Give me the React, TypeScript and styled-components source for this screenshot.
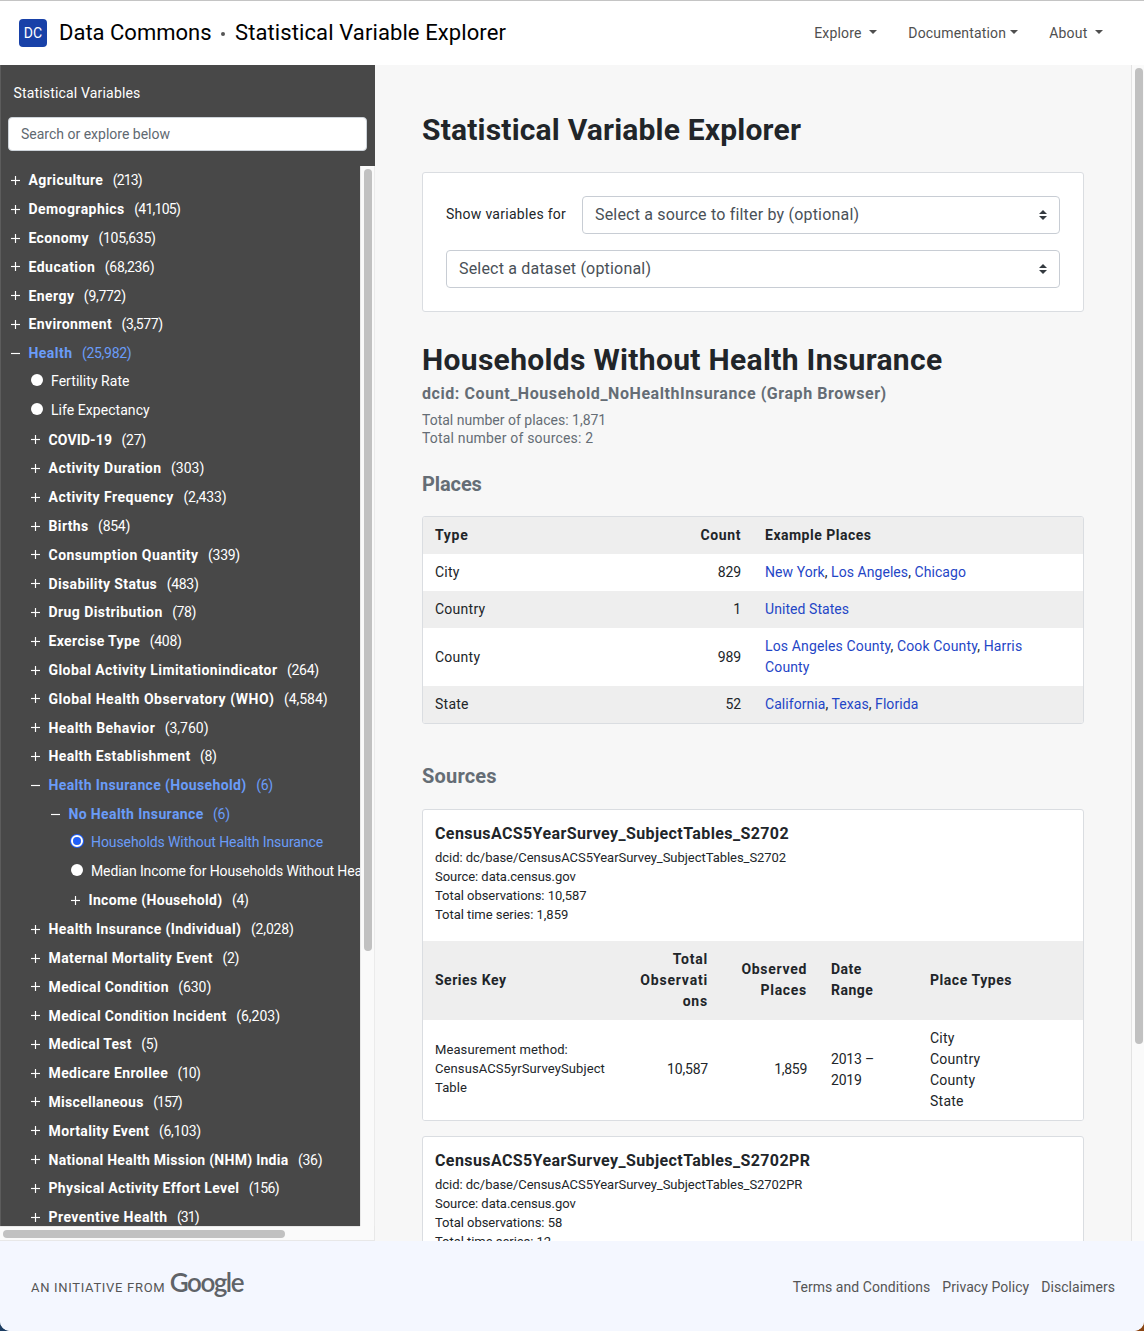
import React from 'react';
import styled, { createGlobalStyle, css } from 'styled-components';

const GlobalStyle = createGlobalStyle`
  *, *::before, *::after { box-sizing: border-box; }
  body {
    margin: 0;
    background: linear-gradient(90deg, #1c3d63 50%, #8a4513 50%);
    font-family: Roboto, "Liberation Sans", sans-serif;
    font-size: 14px;
    line-height: 21px;
    color: #212529;
  }
`;

const Page = styled.div`
  width: 1144px;
  height: 1331px;
  display: flex;
  flex-direction: column;
  overflow: hidden;
  background: #fff;
  border-radius: 0 0 10px 10px;
`;

/* ---------- header ---------- */

const Header = styled.header`
  height: 65px;
  flex: none;
  display: flex;
  align-items: center;
  padding: 0 41px 0 19px;
  border-top: 1px solid #c4c4c4;
`;

const Badge = styled.div`
  width: 28px;
  height: 28px;
  border-radius: 4px;
  background: #1841a8;
  color: #fff;
  font-size: 14px;
  line-height: 29px;
  text-align: center;
  letter-spacing: 0.2px;
`;

const Brand = styled.div<{ $spacing: number }>`
  font-size: 22px;
  line-height: 30px;
  color: #000;
  letter-spacing: ${(p) => p.$spacing}px;
  white-space: nowrap;
`;

const BrandGroup = styled.div`
  display: flex;
  align-items: center;
  margin-left: 12px;
  padding-bottom: 1px;
`;

const Dot = styled.span`
  width: 4px;
  height: 4px;
  margin: 3px 10px 0 9.5px;
  border-radius: 50%;
  background: #555;
`;

const Nav = styled.nav`
  margin-left: auto;
  display: flex;
  gap: 31.2px;
`;

const NavItem = styled.a<{ $gap: number }>`
  display: flex;
  align-items: center;
  gap: ${(p) => p.$gap}px;
  color: #4f4f4f;
  letter-spacing: 0.17px;

  &::after {
    content: '';
    margin-bottom: 3px;
    border: 4px solid transparent;
    border-top-color: #4f4f4f;
    border-bottom: 0;
  }
`;

/* ---------- body ---------- */

const Body = styled.div`
  height: 1176px;
  flex: none;
  display: flex;
  background: #f7f7f7;
`;

const Sidebar = styled.aside`
  width: 375px;
  flex: none;
  display: flex;
  flex-direction: column;
  background: #484848;
  color: #fff;
`;

const SidebarTop = styled.div`
  height: 101px;
  flex: none;
  padding: 18px 8px 0;
  border-left: 1px solid #5c5c5c;
`;

const SidebarTitle = styled.div`
  padding-left: 4.5px;
  letter-spacing: 0.17px;
`;

const Search = styled.input`
  display: block;
  width: 359px;
  height: 34px;
  margin: 13px 0 0 -1px;
  padding: 0 12px;
  border: 1px solid #ced4da;
  border-radius: 4px;
  background: #fff;
  font: 14px Roboto, "Liberation Sans", sans-serif;

  &::placeholder { color: #5f6971; opacity: 1; }
`;

const TreeFrame = styled.div`
  flex: 1;
  display: grid;
  grid-template: 1060px 15px / 360px 15px;
`;

const Tree = styled.div`
  overflow: hidden;
  border-left: 1px solid #5c5c5c;
  padding-top: 0.6px;
`;

const Node = styled.div<{ $level: number; $active?: boolean }>`
  height: 28.8px;
  display: flex;
  align-items: center;
  padding-left: ${(p) => 10 + p.$level * 20}px;
  white-space: nowrap;
  color: ${(p) => (p.$active ? '#6a9cf8' : '#fff')};
`;

const Toggle = styled.svg`
  width: 9px;
  height: 10px;
  flex: none;
  margin: 0 8.5px 2px 0;
  stroke: #fff;
  stroke-width: 1.15;
`;

const NodeName = styled.span<{ $spacing: number }>`
  font-weight: 700;
  letter-spacing: ${(p) => p.$spacing}px;
`;

const NodeCount = styled.span<{ $spacing: number }>`
  margin-left: 9.5px;
  letter-spacing: ${(p) => p.$spacing}px;
`;

const Radio = styled.span<{ $checked?: boolean }>`
  width: 12px;
  height: 12px;
  flex: none;
  margin: 0 8.5px 5px -0.5px;
  border-radius: 50%;
  background: #fff;
  ${(p) =>
    p.$checked &&
    css`
      border: 2px solid #fff;
      background: #1f5ffb;
      box-shadow: 0 0 0 1px #1f5ffb;
      background-clip: padding-box;
    `}
`;

const LeafName = styled.span<{ $spacing: number }>`
  letter-spacing: ${(p) => p.$spacing}px;
  padding-bottom: 2px;
`;

const VTrack = styled.div`
  background: #fafafa;
  border-left: 1px solid #e8e8e8;
  border-right: 1px solid #ebebeb;
  padding: 3px 2px 0 3px;
`;

const HTrack = styled.div`
  background: #fafafa;
  border-top: 1px solid #e8e8e8;
  border-bottom: 1px solid #e8e8e8;
  padding: 3px 0 0 3px;
`;

const Corner = styled.div`
  background: #fafafa;
  border-right: 1px solid #e8e8e8;
  border-bottom: 1px solid #e8e8e8;
`;

const Thumb = styled.div<{ $w: number; $h: number }>`
  width: ${(p) => p.$w}px;
  height: ${(p) => p.$h}px;
  border-radius: 4px;
  background: #c1c1c1;
`;

const MainTrack = styled.div`
  width: 13px;
  flex: none;
  background: #fafafa;
  border-left: 1px solid #e3e3e3;
  padding: 3px 0 0 3px;
`;

/* ---------- main column ---------- */

const Main = styled.main`
  flex: 1;
  min-width: 0;
  overflow: hidden;
  padding: 47px 47px 0;
`;

const Title = styled.h1<{ $spacing: number }>`
  margin: 0;
  font-size: 30px;
  line-height: 36px;
  font-weight: 700;
  letter-spacing: ${(p) => p.$spacing}px;
`;

const Card = styled.section`
  border: 1px solid #dadde1;
  border-radius: 3px;
  background: #fff;
  overflow: hidden;
`;

const Filters = styled(Card)`
  height: 140px;
  margin: 24px 0 30px;
  padding: 23px;
  display: flex;
  flex-direction: column;
  gap: 16px;
`;

const FilterRow = styled.div`
  display: flex;
  align-items: center;
`;

const FilterLabel = styled.label`
  width: 136px;
  letter-spacing: 0.28px;
  padding-bottom: 2px;
`;

const Select = styled.div`
  flex: 1;
  height: 38px;
  display: flex;
  align-items: center;
  justify-content: space-between;
  padding: 0 12px 1px;
  border: 1px solid #c8cdd4;
  border-radius: 4px;
  font-size: 16px;
  letter-spacing: 0.19px;
  color: #495057;
`;

const Arrows = styled.svg`
  width: 8px;
  height: 10px;
  margin-top: 1px;
  fill: #343a40;
`;

const Dcid = styled.div`
  margin-top: 4px;
  font-size: 16px;
  line-height: 24px;
  font-weight: 700;
  color: #656d75;
  letter-spacing: 0.57px;
`;

const Totals = styled.div`
  margin-top: 5px;
  line-height: 18px;
  color: #656d75;
`;

const Total = styled.div<{ $spacing: number }>`
  letter-spacing: ${(p) => p.$spacing}px;
`;

const SectionTitle = styled.h2<{ $top: number; $bottom: number; $spacing: number }>`
  margin: ${(p) => p.$top}px 0 ${(p) => p.$bottom}px;
  font-size: 20px;
  line-height: 24px;
  font-weight: 700;
  color: #656d75;
  letter-spacing: ${(p) => p.$spacing}px;
`;

const Table = styled.table`
  width: 100%;
  table-layout: fixed;
  border-collapse: collapse;

  tr:nth-child(odd) { background: #eee; }
  tr:nth-child(even) { background: #fff; }
`;

type CellProps = {
  $right?: boolean;
  $spacing?: number;
  $small?: boolean;
  $padRight?: number;
  $padLeft?: number;
  $lift?: number;
};

const Cell = styled.td<CellProps>`
  padding: ${(p) => 8 - (p.$lift ?? 0)}px ${(p) => p.$padRight ?? 12}px
    ${(p) => 8 + (p.$lift ?? 0)}px ${(p) => p.$padLeft ?? 12}px;
  text-align: ${(p) => (p.$right ? 'right' : 'left')};
  vertical-align: middle;
  overflow-wrap: anywhere;
  letter-spacing: ${(p) => p.$spacing ?? 0.1}px;
  ${(p) =>
    p.$small &&
    css`
      font-size: 13px;
      line-height: 19px;
    `}
`;

const HeadCell = styled(Cell).attrs({ as: 'th' })`
  font-weight: 700;
  letter-spacing: ${(p) => p.$spacing ?? 0.5}px;
`;

const Link = styled.a`
  color: #1f46c6;
`;

const SourceCard = styled(Card)`
  margin-bottom: 15px;
`;

const SourceInfo = styled.div`
  height: 131px;
  padding: 12px 12px 0;
  font-size: 13px;
  line-height: 19px;
  letter-spacing: -0.04px;
`;

const SourceName = styled.h3`
  margin: 0 0 2px;
  font-size: 16px;
  line-height: 24px;
  font-weight: 700;
  letter-spacing: 0.4px;
`;

/* ---------- footer ---------- */

const Footer = styled.footer`
  flex: 1;
  display: flex;
  align-items: center;
  justify-content: space-between;
  padding: 2px 29px 0 31px;
  background: #f4f7ff;
  color: #555;
`;

const Initiative = styled.div`
  display: flex;
  align-items: baseline;
  font-size: 13px;
  letter-spacing: 0.69px;
  margin-top: -9px;
`;

const Wordmark = styled.span`
  margin-left: 4.5px;
  font-family: Lato, sans-serif;
  font-size: 26px;
  line-height: 30px;
  font-weight: 600;
  letter-spacing: -1.5px;
  color: #5f6368;
`;

const FooterLinks = styled.div`
  display: flex;
  gap: 12px;
  letter-spacing: 0.05px;
`;

type TreeItem = {
  name: string;
  level: number;
  count?: string;
  spacing?: number;
  countSpacing?: number;
  open?: boolean;
  active?: boolean;
  checked?: boolean;
};

const TREE: TreeItem[] = [
  { name: 'Agriculture', count: '213', level: 0, spacing: 0.42, countSpacing: -0.9 },
  { name: 'Demographics', count: '41,105', level: 0, spacing: 0.43, countSpacing: -0.72 },
  { name: 'Economy', count: '105,635', level: 0 },
  { name: 'Education', count: '68,236', level: 0, spacing: 0.48 },
  { name: 'Energy', count: '9,772', level: 0, spacing: 0.42 },
  { name: 'Environment', count: '3,577', level: 0, countSpacing: -0.38 },
  { name: 'Health', count: '25,982', level: 0, spacing: 0.45, open: true, active: true },
  { name: 'Fertility Rate', level: 1 },
  { name: 'Life Expectancy', level: 1 },
  { name: 'COVID-19', count: '27', level: 1, spacing: 0.12 },
  { name: 'Activity Duration', count: '303', level: 1, spacing: 0.49, countSpacing: 0 },
  { name: 'Activity Frequency', count: '2,433', level: 1, spacing: 0.48, countSpacing: -0.1 },
  { name: 'Births', count: '854', level: 1 },
  { name: 'Consumption Quantity', count: '339', level: 1, spacing: 0.47 },
  { name: 'Disability Status', count: '483', level: 1 },
  { name: 'Drug Distribution', count: '78', level: 1, spacing: 0.42, countSpacing: -0.4 },
  { name: 'Exercise Type', count: '408', level: 1 },
  { name: 'Global Activity Limitationindicator', count: '264', level: 1, spacing: 0.43 },
  { name: 'Global Health Observatory (WHO)', count: '4,584', level: 1, spacing: 0.5, countSpacing: -0.05 },
  { name: 'Health Behavior', count: '3,760', level: 1, spacing: 0.43, countSpacing: 0 },
  { name: 'Health Establishment', count: '8', level: 1 },
  { name: 'Health Insurance (Household)', count: '6', level: 1, open: true, active: true },
  { name: 'No Health Insurance', count: '6', level: 2, open: true, active: true },
  { name: 'Households Without Health Insurance', level: 3, active: true, checked: true, spacing: -0.09 },
  { name: 'Median Income for Households Without Health Insurance', level: 3, spacing: -0.12 },
  { name: 'Income (Household)', count: '4', level: 3, spacing: 0.34 },
  { name: 'Health Insurance (Individual)', count: '2,028', level: 1, spacing: 0.4, countSpacing: -0.15 },
  { name: 'Maternal Mortality Event', count: '2', level: 1, spacing: 0.39 },
  { name: 'Medical Condition', count: '630', level: 1, countSpacing: -0.1 },
  { name: 'Medical Condition Incident', count: '6,203', level: 1, countSpacing: 0 },
  { name: 'Medical Test', count: '5', level: 1, spacing: 0.22 },
  { name: 'Medicare Enrollee', count: '10', level: 1, countSpacing: -0.7 },
  { name: 'Miscellaneous', count: '157', level: 1, spacing: 0.3, countSpacing: -0.95 },
  { name: 'Mortality Event', count: '6,103', level: 1 },
  { name: 'National Health Mission (NHM) India', count: '36', level: 1, spacing: 0.27 },
  { name: 'Physical Activity Effort Level', count: '156', level: 1, spacing: 0.34, countSpacing: -0.65 },
  { name: 'Preventive Health', count: '31', level: 1, spacing: 0.43, countSpacing: -0.9 },
];

const PLACES = [
  { type: 'City', count: '829', examples: ['New York', 'Los Angeles', 'Chicago'] },
  { type: 'Country', count: '1', examples: ['United States'] },
  { type: 'County', count: '989', examples: ['Los Angeles County', 'Cook County', 'Harris County'] },
  { type: 'State', count: '52', examples: ['California', 'Texas', 'Florida'] },
];

function TreeRow({ item }: { item: TreeItem }) {
  if (!item.count) {
    return (
      <Node $level={item.level} $active={item.active}>
        <Radio $checked={item.checked} />
        <LeafName $spacing={item.spacing ?? 0.05}>{item.name}</LeafName>
      </Node>
    );
  }
  return (
    <Node $level={item.level} $active={item.active}>
      <Toggle viewBox="0 0 9 10">
        <line x1="0" y1="5.5" x2="9" y2="5.5" />
        {!item.open && <line x1="4.5" y1="1" x2="4.5" y2="10" />}
      </Toggle>
      <NodeName $spacing={item.spacing ?? 0.37}>{item.name}</NodeName>
      <NodeCount $spacing={item.countSpacing ?? -0.28}>({item.count})</NodeCount>
    </Node>
  );
}

function SelectBox({ children }: { children: React.ReactNode }) {
  return (
    <Select>
      {children}
      <Arrows viewBox="0 0 8 10">
        <path d="M4 0 8 4H0zM4 10 0 6h8z" />
      </Arrows>
    </Select>
  );
}

function SourceHeading({ name, observations, series }: { name: string; observations: string; series: string }) {
  return (
    <SourceInfo>
      <SourceName>{name}</SourceName>
      <div>dcid: dc/base/{name}</div>
      <div>Source: data.census.gov</div>
      <div>Total observations: {observations}</div>
      <div>Total time series: {series}</div>
    </SourceInfo>
  );
}

export default function App() {
  return (
    <>
      <GlobalStyle />
      <Page>
        <Header>
          <Badge>DC</Badge>
          <BrandGroup>
            <Brand $spacing={0}>Data Commons</Brand>
            <Dot />
            <Brand $spacing={0.1}>Statistical Variable Explorer</Brand>
          </BrandGroup>
          <Nav>
            <NavItem $gap={7.6}>Explore</NavItem>
            <NavItem $gap={4}>Documentation</NavItem>
            <NavItem $gap={7.6}>About</NavItem>
          </Nav>
        </Header>

        <Body>
          <Sidebar>
            <SidebarTop>
              <SidebarTitle>Statistical Variables</SidebarTitle>
              <Search placeholder="Search or explore below" />
            </SidebarTop>
            <TreeFrame>
              <Tree>
                {TREE.map((item) => (
                  <TreeRow key={item.name} item={item} />
                ))}
              </Tree>
              <VTrack>
                <Thumb $w={8} $h={782} />
              </VTrack>
              <HTrack>
                <Thumb $w={282} $h={8} />
              </HTrack>
              <Corner />
            </TreeFrame>
          </Sidebar>

          <Main>
            <Title $spacing={0.19}>Statistical Variable Explorer</Title>
            <Filters>
              <FilterRow>
                <FilterLabel>Show variables for</FilterLabel>
                <SelectBox>Select a source to filter by (optional)</SelectBox>
              </FilterRow>
              <FilterRow>
                <SelectBox>Select a dataset (optional)</SelectBox>
              </FilterRow>
            </Filters>

            <Title $spacing={0.32}>Households Without Health Insurance</Title>
            <Dcid>dcid: Count_Household_NoHealthInsurance (Graph Browser)</Dcid>
            <Totals>
              <Total $spacing={0}>Total number of places: 1,871</Total>
              <Total $spacing={0.18}>Total number of sources: 2</Total>
            </Totals>

            <SectionTitle $top={25} $bottom={20} $spacing={-0.1}>Places</SectionTitle>
            <Card>
              <Table>
                <colgroup>
                  <col width="35%" />
                  <col width="15%" />
                  <col width="50%" />
                </colgroup>
                <tbody>
                  <tr>
                    <HeadCell $spacing={0.7}>Type</HeadCell>
                    <HeadCell $right $spacing={0.6}>Count</HeadCell>
                    <HeadCell>Example Places</HeadCell>
                  </tr>
                  {PLACES.map((p) => (
                    <tr key={p.type}>
                      <Cell $spacing={0.25}>{p.type}</Cell>
                      <Cell $right $spacing={-0.1}>{p.count}</Cell>
                      <Cell $padRight={36} $spacing={p.type === 'County' ? 0.14 : 0.06}>
                        {p.examples.map((e, i) => (
                          <React.Fragment key={e}>
                            {i > 0 && ', '}
                            <Link>{e}</Link>
                          </React.Fragment>
                        ))}
                      </Cell>
                    </tr>
                  ))}
                </tbody>
              </Table>
            </Card>

            <SectionTitle $top={40} $bottom={21} $spacing={0.2}>Sources</SectionTitle>
            <SourceCard>
              <SourceHeading name="CensusACS5YearSurvey_SubjectTables_S2702" observations="10,587" series="1,859" />
              <Table>
                <colgroup>
                  <col width="30%" />
                  <col width="15%" />
                  <col width="15%" />
                  <col width="15%" />
                  <col width="25%" />
                </colgroup>
                <tbody>
                  <tr>
                    <HeadCell>Series Key</HeadCell>
                    <HeadCell $right $spacing={0.8} $padLeft={18}>Total Observations</HeadCell>
                    <HeadCell $right $spacing={0.7} $lift={0.5}>Observed Places</HeadCell>
                    <HeadCell $lift={0.5}>Date Range</HeadCell>
                    <HeadCell $spacing={0.55}>Place Types</HeadCell>
                  </tr>
                  <tr>
                    <Cell $small $lift={2}>Measurement method: CensusACS5yrSurveySubjectTable</Cell>
                    <Cell $right $spacing={-0.2} $lift={1}>10,587</Cell>
                    <Cell $right $spacing={-0.3} $lift={1}>1,859</Cell>
                    <Cell $spacing={-0.2} $padRight={30}>2013 – 2019</Cell>
                    <Cell $spacing={0.25}>
                      <div>City</div>
                      <div>Country</div>
                      <div>County</div>
                      <div>State</div>
                    </Cell>
                  </tr>
                </tbody>
              </Table>
            </SourceCard>
            <SourceCard>
              <SourceHeading name="CensusACS5YearSurvey_SubjectTables_S2702PR" observations="58" series="12" />
            </SourceCard>
          </Main>
          <MainTrack>
            <Thumb $w={8} $h={976} />
          </MainTrack>
        </Body>

        <Footer>
          <Initiative>
            AN INITIATIVE FROM
            <Wordmark>Google</Wordmark>
          </Initiative>
          <FooterLinks>
            <a>Terms and Conditions</a>
            <a>Privacy Policy</a>
            <a>Disclaimers</a>
          </FooterLinks>
        </Footer>
      </Page>
    </>
  );
}
